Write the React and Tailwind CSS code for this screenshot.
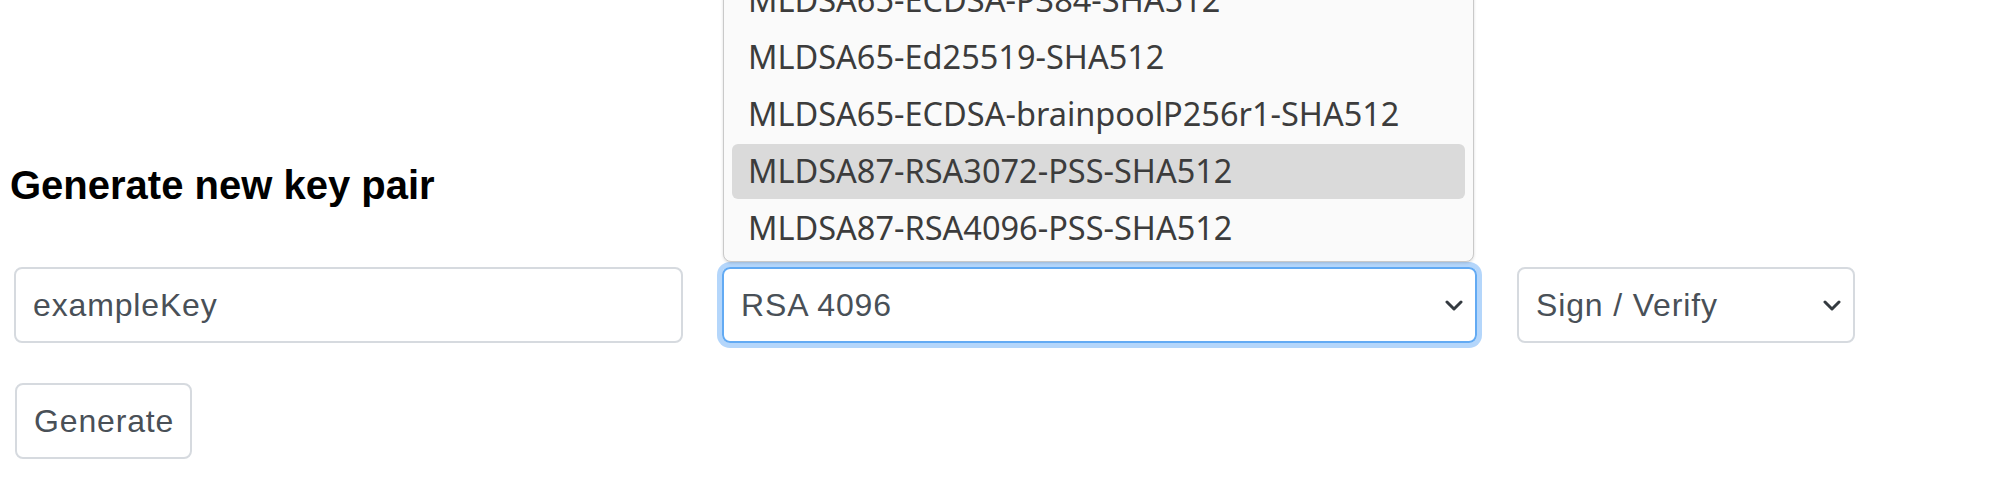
import React from "react";

const Chevron = () => (
  <svg width="18" height="11" viewBox="0 0 18 11" className="shrink-0">
    <path d="M2 2 L9 9 L16 2" fill="none" stroke="#343a40" strokeWidth="3" strokeLinecap="round" strokeLinejoin="round" />
  </svg>
);

const options = [
  "MLDSA65-RSA4096-PKCS15-SHA512",
  "MLDSA65-ECDSA-P256-SHA512",
  "MLDSA65-ECDSA-P384-SHA512",
  "MLDSA65-Ed25519-SHA512",
  "MLDSA65-ECDSA-brainpoolP256r1-SHA512",
  "MLDSA87-RSA3072-PSS-SHA512",
  "MLDSA87-RSA4096-PSS-SHA512",
];

export default function App() {
  return (
    <div className="h-[494px] w-[2012px] overflow-hidden bg-white font-['Liberation_Sans',Arial,sans-serif]">
      <div className="pt-[161px]">
        <h5 className="pl-[10px] text-[40px] font-bold leading-[48px] text-black">Generate new key pair</h5>
        <div className="mt-[58px] flex items-start pl-[14px]">
          <div className="flex h-[76px] w-[669px] items-center rounded-[8px] border-2 border-[#d6dadf] pl-[17px] text-[32px] leading-[48px] tracking-[0.85px] text-[#495057]">
            exampleKey
          </div>
          <div className="relative ml-[39px] w-[755px]">
            <div className="absolute bottom-[calc(100%+5px)] left-[1px] right-[3px] flex flex-col gap-[2px] rounded-b-[8px] border border-[#c9c9c9] bg-[#fafafa] px-[8px] pb-[5px] font-['Noto_Sans',sans-serif] text-[32.5px] text-[#3c3c3c] shadow-[0_1px_3px_rgba(0,0,0,0.15)]">
              {options.map((o) => (
                <div
                  key={o}
                  className={
                    "flex h-[55px] items-center whitespace-nowrap rounded-[6px] pl-[16px] " +
                    (o === "MLDSA87-RSA3072-PSS-SHA512" ? "bg-[#dadada]" : "")
                  }
                >
                  {o}
                </div>
              ))}
            </div>
            <div className="flex h-[76px] items-center justify-between rounded-[8px] border-2 border-[#62aaf3] pl-[17px] pr-3 text-[32px] leading-[48px] tracking-[0.85px] text-[#495057] shadow-[0_0_0_5px_#b4d6fb]">
              <span>RSA 4096</span>
              <Chevron />
            </div>
          </div>
          <div className="ml-[40px] flex h-[76px] w-[338px] items-center justify-between rounded-[8px] border-2 border-[#d6dadf] pl-[17px] pr-3 text-[32px] leading-[48px] tracking-[0.85px] text-[#495057]">
            <span>Sign / Verify</span>
            <Chevron />
          </div>
        </div>
        <div className="mt-[40px] pl-[15px]">
          <div className="flex h-[76px] w-[177px] items-center rounded-[8px] border-2 border-[#d6dadf] pl-[17px] text-[32px] leading-[48px] tracking-[0.85px] text-[#495057]">
            Generate
          </div>
        </div>
      </div>
    </div>
  );
}
